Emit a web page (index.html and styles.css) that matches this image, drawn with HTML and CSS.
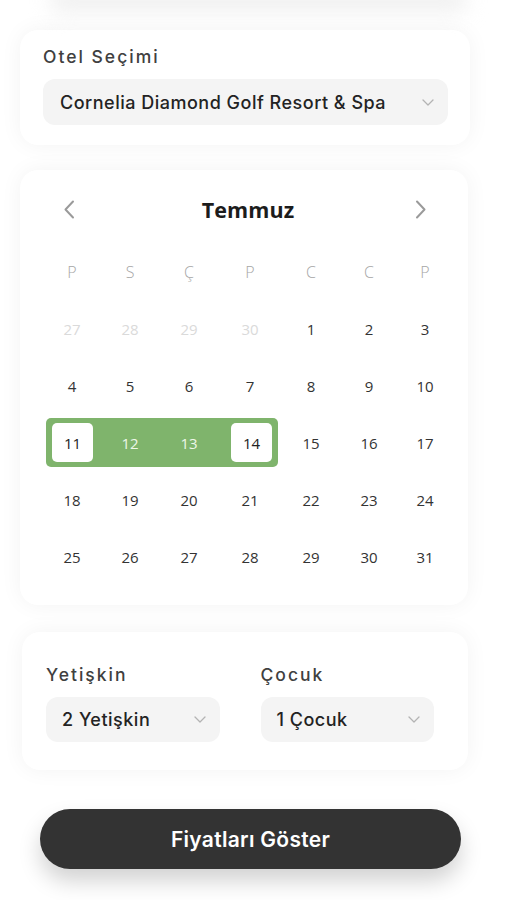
FILE: index.html
```html
<!DOCTYPE html>
<html lang="tr">
<head>
<meta charset="utf-8">
<title>Rezervasyon</title>
<link rel="stylesheet" href="styles.css">
</head>
<body>
<div class="ghost"></div>

<section class="card hotel-card">
  <div class="label">Otel Seçimi</div>
  <div class="select select-wide">
    <span>Cornelia Diamond Golf Resort &amp; Spa</span>
    <svg class="chev" width="12" height="7" viewBox="0 0 12 7"><path d="M1 1l5 5 5-5" fill="none" stroke="#b3b3b3" stroke-width="1.3" stroke-linecap="round" stroke-linejoin="round"/></svg>
  </div>
</section>

<section class="card cal-card">
  <div class="cal-head">
    <svg width="12" height="19" viewBox="0 0 12 19"><path d="M10 1.5L2.5 9.5 10 17.5" fill="none" stroke="#9a9a9a" stroke-width="2" stroke-linecap="round" stroke-linejoin="round"/></svg>
    <div class="month">Temmuz</div>
    <svg width="12" height="19" viewBox="0 0 12 19"><path d="M2 1.5l7.5 8L2 17.5" fill="none" stroke="#9a9a9a" stroke-width="2" stroke-linecap="round" stroke-linejoin="round"/></svg>
  </div>
  <div class="grid">
    <div class="wd">P</div><div class="wd">S</div><div class="wd">Ç</div><div class="wd">P</div><div class="wd">C</div><div class="wd">C</div><div class="wd">P</div>

    <div class="d muted">27</div><div class="d muted">28</div><div class="d muted">29</div><div class="d muted">30</div><div class="d">1</div><div class="d">2</div><div class="d">3</div>
    <div class="d">4</div><div class="d">5</div><div class="d">6</div><div class="d">7</div><div class="d">8</div><div class="d">9</div><div class="d">10</div>
    <div class="d range start"><span class="box">11</span></div><div class="d range mid">12</div><div class="d range mid">13</div><div class="d range end"><span class="box">14</span></div><div class="d">15</div><div class="d">16</div><div class="d">17</div>
    <div class="d">18</div><div class="d">19</div><div class="d">20</div><div class="d">21</div><div class="d">22</div><div class="d">23</div><div class="d">24</div>
    <div class="d">25</div><div class="d">26</div><div class="d">27</div><div class="d">28</div><div class="d">29</div><div class="d">30</div><div class="d">31</div>
  </div>
</section>

<section class="card guest-card">
  <div class="field">
    <div class="label">Yetişkin</div>
    <div class="select">
      <span>2 Yetişkin</span>
      <svg class="chev" width="12" height="7" viewBox="0 0 12 7"><path d="M1 1l5 5 5-5" fill="none" stroke="#b3b3b3" stroke-width="1.3" stroke-linecap="round" stroke-linejoin="round"/></svg>
    </div>
  </div>
  <div class="field">
    <div class="label">Çocuk</div>
    <div class="select">
      <span>1 Çocuk</span>
      <svg class="chev" width="12" height="7" viewBox="0 0 12 7"><path d="M1 1l5 5 5-5" fill="none" stroke="#b3b3b3" stroke-width="1.3" stroke-linecap="round" stroke-linejoin="round"/></svg>
    </div>
  </div>
</section>

<div class="btn-wrap">
  <button class="btn">Fiyatları Göster</button>
</div>
</body>
</html>
```

FILE: styles.css
```css
* { box-sizing: border-box; }
html, body { margin: 0; padding: 0; background: #ffffff; }
body {
  font-family: "Inter", "Noto Sans", sans-serif;
  color: #2a2a2a;
  width: 507px;
  overflow: hidden;
}

.ghost {
  height: 24px;
  margin: -12px 40px 0 50px;
  background: #f0f0f0;
  border-radius: 10px;
  filter: blur(10px);
}

.card {
  background: #fff;
  border-radius: 18px;
  box-shadow: 0 0 22px rgba(0, 0, 0, 0.05);
}

.label {
  font-size: 17.5px;
  line-height: 22px;
  letter-spacing: 2px;
  color: #404040;
  font-weight: 500;
}

.select {
  display: flex;
  align-items: center;
  justify-content: space-between;
  background: #f4f4f4;
  border-radius: 12px;
  height: 46px;
  padding: 0 14px 0 17px;
  font-size: 18px;
  letter-spacing: 0.5px;
  font-weight: 500;
  color: #232323;
}
.select .chev { flex: none; }

.hotel-card {
  margin: 18px 37px 0 20px;
  padding: 16px 22px 20px 23px;
}
.hotel-card .select { margin-top: 11px; }

.cal-card {
  margin: 25px 39px 0 20px;
  padding: 19px 15px 24px 23px;
  font-family: "Open Sans", "Noto Sans", sans-serif;
}
.cal-head {
  display: flex;
  align-items: center;
  justify-content: space-between;
  height: 40px;
  padding: 0 26px 0 20px;
}
.month {
  font-family: "Open Sans", sans-serif;
  font-size: 21.5px;
  letter-spacing: 0.1px;
  font-weight: 700;
  color: #1c1c1c;
  padding-left: 6px;
}
.grid {
  margin-top: 18px;
  display: grid;
  grid-template-columns: 58px 58px 60px 62px 60px 56px 56px;
  grid-auto-rows: 49px;
  row-gap: 8px;
}
.wd, .d {
  display: flex;
  align-items: center;
  justify-content: center;
  font-size: 15px;
}
.wd { color: #a6a6a6; font-size: 16px; font-weight: 300; }
.d { color: #333; }
.d.muted { color: #dadada; }
.range { background: #7fb46c; color: #eef7e8; }
.range.start { margin-left: 3px; border-radius: 5px 0 0 5px; justify-content: flex-start; padding-left: 6px; }
.range.end { margin-right: 3px; border-radius: 0 5px 5px 0; justify-content: flex-end; padding-right: 6px; }
.box {
  width: 41px;
  height: 39px;
  background: #fff;
  color: #222;
  border-radius: 5px;
  display: flex;
  align-items: center;
  justify-content: center;
}

.guest-card {
  margin: 27px 39px 0 22px;
  padding: 32px 34px 28px 24px;
  display: flex;
  gap: 41px;
}
.field { flex: 1; }
.field .select { margin-top: 11px; height: 45px; padding-left: 16px; }

.btn-wrap { padding: 39px 46px 60px 40px; }
.btn {
  display: block;
  width: 100%;
  height: 60px;
  border: none;
  border-radius: 30px;
  background: #333333;
  color: #fff;
  font-family: "Inter", "Noto Sans", sans-serif;
  font-size: 21px;
  letter-spacing: 0.3px;
  font-weight: 600;
  box-shadow: 0 12px 22px rgba(0, 0, 0, 0.18);
}
```
